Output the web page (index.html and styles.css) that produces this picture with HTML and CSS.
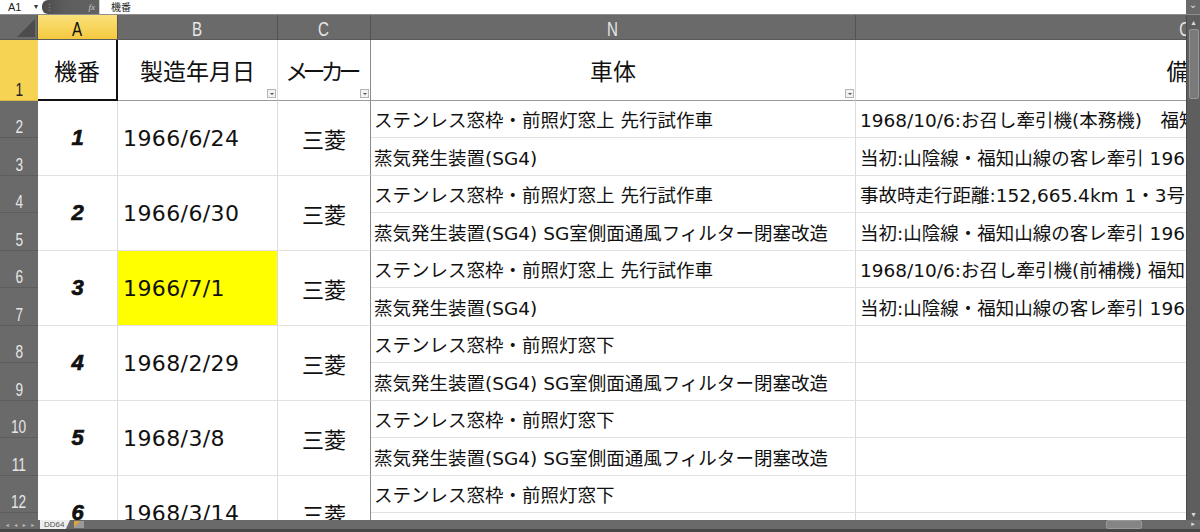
FILE: index.html
```html
<!DOCTYPE html>
<html lang="ja">
<head>
<meta charset="utf-8">
<title>DD64</title>
<link rel="stylesheet" href="styles.css">
</head>
<body>
<div class="app">
  <div class="fbar">
    <div class="namebox"><span class="nb-text">A1</span><span class="nb-arrow">▾</span></div>
    <div class="fx-area"><span class="grip">⋮</span><span class="fx">fx</span></div>
    <div class="formula">機番</div>
    <div class="expand">⌄</div>
  </div>
  <div class="main">
    <div class="viewport">
      <div class="grid">
        <div class="corner"><span class="tri"></span></div>
        <div class="colh sel"><span>A</span></div>
        <div class="colh"><span>B</span></div>
        <div class="colh"><span>C</span></div>
        <div class="colh frz"><span>N</span></div>
        <div class="colh"><span>O</span></div>

        <div class="rowh sel"><span>1</span></div>
        <div class="hc a active">機番</div>
        <div class="hc">製造年月日<span class="fbtn"></span></div>
        <div class="hc c">メーカー<span class="fbtn"></span></div>
        <div class="hc">車体<span class="fbtn"></span></div>
        <div class="hc o">備考</div>

        <div class="rowh"><span>2</span></div>
        <div class="m a">1</div>
        <div class="m b">1966/6/24</div>
        <div class="m c">三菱</div>
        <div class="t">ステンレス窓枠・前照灯窓上 先行試作車</div>
        <div class="t o">1968/10/6:お召し牽引機(本務機)　福知山</div>
        <div class="rowh"><span>3</span></div>
        <div class="t">蒸気発生装置(SG4)</div>
        <div class="t o">当初:山陰線・福知山線の客レ牽引 1969</div>

        <div class="rowh"><span>4</span></div>
        <div class="m a">2</div>
        <div class="m b">1966/6/30</div>
        <div class="m c">三菱</div>
        <div class="t">ステンレス窓枠・前照灯窓上 先行試作車</div>
        <div class="t o">事故時走行距離:152,665.4km 1・3号</div>
        <div class="rowh"><span>5</span></div>
        <div class="t">蒸気発生装置(SG4) SG室側面通風フィルター閉塞改造</div>
        <div class="t o">当初:山陰線・福知山線の客レ牽引 1969</div>

        <div class="rowh"><span>6</span></div>
        <div class="m a">3</div>
        <div class="m b yellow">1966/7/1</div>
        <div class="m c">三菱</div>
        <div class="t">ステンレス窓枠・前照灯窓上 先行試作車</div>
        <div class="t o">1968/10/6:お召し牽引機(前補機) 福知山</div>
        <div class="rowh"><span>7</span></div>
        <div class="t">蒸気発生装置(SG4)</div>
        <div class="t o">当初:山陰線・福知山線の客レ牽引 1969</div>

        <div class="rowh"><span>8</span></div>
        <div class="m a">4</div>
        <div class="m b">1968/2/29</div>
        <div class="m c">三菱</div>
        <div class="t">ステンレス窓枠・前照灯窓下</div>
        <div class="t o"></div>
        <div class="rowh"><span>9</span></div>
        <div class="t">蒸気発生装置(SG4) SG室側面通風フィルター閉塞改造</div>
        <div class="t o"></div>

        <div class="rowh"><span>10</span></div>
        <div class="m a">5</div>
        <div class="m b">1968/3/8</div>
        <div class="m c">三菱</div>
        <div class="t">ステンレス窓枠・前照灯窓下</div>
        <div class="t o"></div>
        <div class="rowh"><span>11</span></div>
        <div class="t">蒸気発生装置(SG4) SG室側面通風フィルター閉塞改造</div>
        <div class="t o"></div>

        <div class="rowh"><span>12</span></div>
        <div class="m a">6</div>
        <div class="m b">1968/3/14</div>
        <div class="m c">三菱</div>
        <div class="t">ステンレス窓枠・前照灯窓下</div>
        <div class="t o"></div>
        <div class="rowh"><span>13</span></div>
        <div class="t">蒸気発生装置(SG4)</div>
        <div class="t o"></div>
      </div>
    </div>
    <div class="vscroll">
      <span class="varrow">▴</span>
      <span class="vthumb"></span>
      <span class="vspace"></span>
      <span class="varrow">▾</span>
    </div>
  </div>
  <div class="bottom">
    <div class="nav"><span>◂</span><span>◂</span><span>▸</span><span>▸</span></div>
    <div class="tab">DD64</div>
    <div class="newsheet"></div>
    <div class="hspace"></div>
    <div class="hthumb"></div>
    <div class="hrest"></div>
    <div class="harrow">▸</div>
  </div>
</div>
</body>
</html>
```
FILE: styles.css
```css
* { box-sizing: border-box; }
html, body { margin: 0; padding: 0; }
body {
  width: 1200px;
  height: 532px;
  overflow: hidden;
  background: #ffffff;
  font-family: "DejaVu Sans", "Noto Sans CJK JP", sans-serif;
  color: #111;
}
.app {
  width: 1200px;
  height: 532px;
  display: flex;
  flex-direction: column;
}

/* formula bar */
.fbar {
  height: 15px;
  flex: none;
  display: flex;
  align-items: stretch;
  background: #fff;
  border-bottom: 1px solid #8e8e8e;
  font-size: 10px;
  line-height: 14px;
}
.namebox {
  width: 42px;
  display: flex;
  align-items: center;
  padding-left: 8px;
  font-family: "Liberation Sans", sans-serif;
  font-size: 11px;
  color: #222;
}
.nb-text { flex: 1; }
.nb-arrow { font-size: 8px; padding-right: 4px; color: #333; }
.fx-area {
  width: 57px;
  display: flex;
  align-items: center;
  justify-content: space-between;
  padding: 0 4px 0 3px;
  background: linear-gradient(90deg, #4b4b4b, #5d5d5d 40%, #626262);
  border-radius: 6px 0 0 6px;
  color: #a8a8a8;
}
.grip { font-size: 9px; color: #8a8a8a; }
.fx { font-family: "Liberation Serif", serif; font-style: italic; font-size: 9px; color: #cfcfcf; }
.formula {
  flex: 1;
  padding-left: 11px;
  font-family: "Noto Sans CJK JP", sans-serif;
  font-size: 10px;
  color: #222;
  border-left: 1px solid #d0d0d0;
}
.expand {
  width: 14px;
  background: #6a6a6a;
  color: #e0e0e0;
  font-size: 10px;
  text-align: center;
  line-height: 10px;
}

/* main area */
.main {
  flex: 1;
  display: flex;
  min-height: 0;
}
.viewport {
  flex: 1;
  overflow: hidden;
}
.grid {
  display: grid;
  grid-template-columns: 38px 80px 160px 93px 485px 660px;
  grid-template-rows: 25px 61px 37px 38px 37px 38px 37px 38px 37px 38px 37px 38px 37px 38px;
}
.corner {
  background: #6a6a6a;
  border-right: 1px solid #555;
  border-bottom: 1px solid #555;
  position: relative;
}
.tri {
  position: absolute;
  right: 2px;
  bottom: 2px;
  width: 0;
  height: 0;
  border-left: 18px solid transparent;
  border-bottom: 18px solid #4c4c4c;
}
.colh {
  background: #6a6a6a;
  color: #e6e6e6;
  border-right: 1px solid #535353;
  border-bottom: 1px solid #5a5a5a;
  display: flex;
  align-items: center;
  justify-content: center;
  font-family: "Liberation Sans", sans-serif;
  font-size: 21px;
  line-height: 21px;
  padding-top: 2px;
}
.colh span,
.rowh span {
  display: inline-block;
  transform: scaleX(0.72);
}
.colh.sel {
  background: linear-gradient(#fbe17c, #f4c93f);
  color: #111;
}
.rowh {
  background: #6a6a6a;
  color: #e6e6e6;
  border-bottom: 1px solid #5d5d5d;
  display: flex;
  align-items: flex-end;
  justify-content: center;
  font-family: "Liberation Sans", sans-serif;
  font-size: 19px;
  line-height: 19px;
  padding-bottom: 1px;
}
.rowh.sel {
  background: #f7d354;
  color: #222;
  border-bottom: 1px solid #d8b84a;
}

/* header row 1 */
.hc {
  position: relative;
  background: #fff;
  border-right: 1px solid #dcdcdc;
  border-bottom: 1px solid #9a9a9a;
  display: flex;
  align-items: center;
  justify-content: center;
  font-family: "Noto Sans CJK JP", sans-serif;
  font-size: 23px;
  color: #111;
}
.hc.c {
  border-right: 1px solid #8a8a8a;
  letter-spacing: -4px;
  font-feature-settings: "palt";
  padding-right: 4px;
}
.hc.o { padding-left: 8px; }
.hc.active {
  border-right: 2px solid #111;
  border-bottom: 2px solid #111;
}
.fbtn {
  position: absolute;
  right: 1px;
  bottom: 2px;
  width: 9px;
  height: 9px;
  background: #f2f2f2;
  border: 1px solid #b5b5b5;
}
.fbtn::after {
  content: "";
  position: absolute;
  left: 2px;
  top: 3px;
  border-left: 2px solid transparent;
  border-right: 2px solid transparent;
  border-top: 2px solid #555;
}

/* body cells */
.m {
  grid-row: span 2;
  background: #fff;
  border-right: 1px solid #dcdcdc;
  border-bottom: 1px solid #e2e2e2;
  display: flex;
  align-items: center;
  font-size: 22px;
  color: #111;
}
.m.a {
  justify-content: center;
  font-family: "Liberation Sans", sans-serif;
  font-weight: bold;
  font-style: italic;
  font-size: 22px;
  -webkit-text-stroke: 0.7px #111;
}
.m.b {
  padding-left: 5px;
  font-family: "DejaVu Sans", "Noto Sans CJK JP", sans-serif;
  font-size: 22px;
  letter-spacing: 0.4px;
}
.m.c {
  justify-content: center;
  font-family: "Noto Sans CJK JP", sans-serif;
  border-right: 1px solid #8a8a8a;
}
.m.yellow { background: #ffff00; }
.t {
  background: #fff;
  border-right: 1px solid #dcdcdc;
  border-bottom: 1px solid #e2e2e2;
  display: flex;
  align-items: center;
  padding-left: 3px;
  white-space: nowrap;
  overflow: hidden;
  font-family: "DejaVu Sans", "Noto Sans CJK JP", sans-serif;
  font-size: 18.5px;
  color: #111;
}
.t.o { padding-left: 4px; }

/* vertical scrollbar */
.vscroll {
  width: 14px;
  flex: none;
  background: #5e5e5e;
  border-left: 1px solid #4a4a4a;
  display: flex;
  flex-direction: column;
  align-items: center;
}
.varrow {
  font-size: 8px;
  line-height: 10px;
  color: #dcdcdc;
  margin-top: 3px;
}
.vthumb {
  width: 10px;
  height: 70px;
  margin-top: 1px;
  background: #7a7a7a;
  border: 1px solid #959595;
  border-radius: 2px;
}
.vspace { flex: 1; }

/* bottom bar */
.bottom {
  height: 12px;
  flex: none;
  display: flex;
  align-items: stretch;
  background: #6a6a6a;
  border-bottom: 3px solid #474747;
  font-size: 7px;
  color: #cfcfcf;
}
.nav {
  width: 40px;
  display: flex;
  align-items: center;
  justify-content: space-around;
  padding: 0 3px;
  font-size: 6px;
  color: #bdbdbd;
}
.tab {
  width: 30px;
  background: #eeeeee;
  color: #555;
  font-family: "Liberation Sans", sans-serif;
  font-size: 8px;
  line-height: 9px;
  padding-left: 4px;
  clip-path: polygon(0 0, 100% 0, 86% 100%, 0 100%);
}
.newsheet {
  width: 10px;
  margin: 1px 0 0 4px;
  background: linear-gradient(135deg, #d9a441 0 40%, #9a9a9a 40%);
  height: 7px;
}
.hspace { flex: 1; }
.hthumb {
  width: 36px;
  background: #858585;
  border: 1px solid #999;
  border-radius: 2px;
}
.hrest { width: 44px; }
.harrow {
  width: 14px;
  font-size: 7px;
  line-height: 9px;
  text-align: center;
  color: #ddd;
}
```
